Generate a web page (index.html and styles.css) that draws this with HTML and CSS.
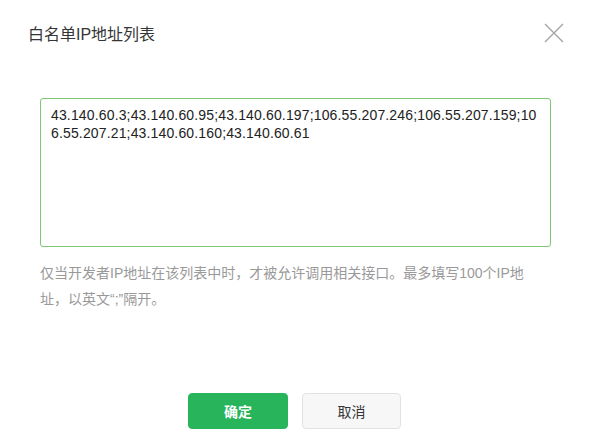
FILE: index.html
```html
<!DOCTYPE html>
<html lang="zh-CN">
<head>
    <meta charset="UTF-8">
    <meta name="viewport" content="width=device-width, initial-scale=1.0">
    <title>白名单IP地址列表</title>
    <link rel="stylesheet" href="styles.css">
</head>
<body>
    <div class="dialog">
        <div class="dialog-head">
            <h3 class="dialog-title">白名单IP地址列表</h3>
            <button class="dialog-close" type="button" aria-label="关闭">
                <svg width="20" height="20" viewBox="0 0 20 20">
                    <path d="M1 1 L19 19 M19 1 L1 19" stroke="#a3a3a3" stroke-width="1.3" fill="none"/>
                </svg>
            </button>
        </div>

        <div class="dialog-body">
            <textarea class="ip-list">43.140.60.3;43.140.60.95;43.140.60.197;106.55.207.246;106.55.207.159;106.55.207.21;43.140.60.160;43.140.60.61</textarea>
            <p class="tips">仅当开发者IP地址在该列表中时，才被允许调用相关接口。最多填写100个IP地址，以英文“;”隔开。</p>
        </div>

        <div class="dialog-foot">
            <button class="btn btn-primary" type="button">确定</button>
            <button class="btn btn-default" type="button">取消</button>
        </div>
    </div>
</body>
</html>
```

FILE: styles.css
```css
body {
    margin: 0;
    background: #fff;
    font-family: "Liberation Sans", "Noto Sans CJK SC", sans-serif;
    color: #353535;
}

.dialog {
    height: 100vh;
    display: flex;
    flex-direction: column;
    overflow: hidden;
}

.dialog-head {
    height: 66px;
    padding: 0 25px 0 28px;
    display: flex;
    align-items: center;
    justify-content: space-between;
}

.dialog-title {
    margin: 0;
    font-size: 16px;
    font-weight: normal;
    color: #353535;
}

.dialog-close {
    padding: 0;
    border: none;
    background: none;
    width: 20px;
    height: 20px;
    cursor: pointer;
}

.dialog-close svg {
    display: block;
}

.dialog-body {
    padding: 32px 39px 0 40px;
}

.ip-list {
    display: block;
    box-sizing: border-box;
    width: 511px;
    height: 149px;
    margin: 0;
    padding: 7px 6px 7px 10px;
    border: 1px solid #7cc875;
    border-radius: 3px;
    outline: none;
    resize: none;
    font-family: "Liberation Sans", "Noto Sans CJK SC", sans-serif;
    font-size: 14px;
    line-height: 18px;
    letter-spacing: 0.15px;
    color: #222;
}

.tips {
    width: 492px;
    margin: 13px 0 0;
    font-size: 14px;
    line-height: 26px;
    color: #999;
}

.dialog-foot {
    margin-top: auto;
    padding-bottom: 10px;
    display: flex;
    justify-content: center;
    gap: 14px;
}

.btn {
    box-sizing: border-box;
    width: 100px;
    height: 36px;
    border-radius: 4px;
    font-family: "Liberation Sans", "Noto Sans CJK SC", sans-serif;
    font-size: 14px;
    cursor: pointer;
}

.btn-primary {
    background: #28b45b;
    border: 1px solid #28b45b;
    color: #fff;
    font-weight: bold;
}

.btn-default {
    width: 99px;
    background: #f7f7f7;
    border: 1px solid #e2e2e2;
    color: #353535;
}
```
